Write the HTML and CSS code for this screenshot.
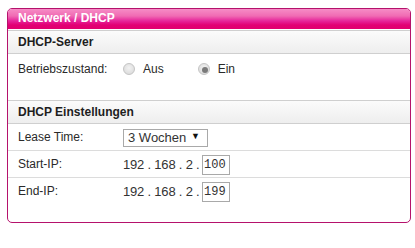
FILE: index.html
```html
<!DOCTYPE html>
<html lang="de">
<head>
  <meta charset="UTF-8">
  <title>Netzwerk / DHCP</title>
  <link rel="stylesheet" href="styles.css">
</head>
<body>
  <div class="panel">
    <div class="panel-title">Netzwerk / DHCP</div>

    <div class="section-head">DHCP-Server</div>
    <div class="row row-first">
      <span class="label">Betriebszustand:</span>
      <div class="radios">
        <label class="radio"><input type="radio" name="state"> Aus</label>
        <label class="radio"><input type="radio" name="state" checked> Ein</label>
      </div>
    </div>

    <div class="section-head">DHCP Einstellungen</div>
    <div class="row line">
      <span class="label">Lease Time:</span>
      <div class="select-wrap">
        <select>
          <option>3 Wochen</option>
        </select>
      </div>
    </div>
    <div class="row line">
      <span class="label">Start-IP:</span>
      <span class="ip">192 . 168 . 2 .</span>
      <input class="octet" type="text" value="100">
    </div>
    <div class="row last">
      <span class="label">End-IP:</span>
      <span class="ip">192 . 168 . 2 .</span>
      <input class="octet" type="text" value="199">
    </div>
  </div>
</body>
</html>
```

FILE: styles.css
```css
body {
  margin: 0;
  padding: 8px 4px 0 7px;
  background: #fff;
  font-family: "Liberation Sans", Arial, sans-serif;
  font-size: 12px;
  color: #222;
}
.panel {
  width: 402px;
  border: 1px solid #b5126c;
  border-radius: 5px;
  overflow: hidden;
  padding-bottom: 18px;
}
.panel-title {
  height: 20px;
  line-height: 19px;
  padding-left: 10px;
  color: #fff;
  font-weight: bold;
  background: linear-gradient(#f68cc6 0%, #f06bb3 35%, #e6239a 60%, #e20074 80%, #e0006f 100%);
  border-bottom: 1px solid #fff;
}
.section-head {
  height: 22px;
  line-height: 22px;
  padding-left: 10px;
  font-weight: bold;
  color: #1e1e1e;
  border-top: 1px solid #cfcfcf;
  border-bottom: 1px solid #cfcfcf;
  background: linear-gradient(#fbfbfb, #eeeeee);
}
.row {
  display: flex;
  align-items: center;
  height: 26px;
  padding-left: 10px;
  color: #2a2a2a;
}
.row-first {
  height: 30px;
  margin-bottom: 16px;
}
.row.line {
  border-bottom: 1px solid #dcdcdc;
}
.label {
  width: 105px;
  flex: none;
}
.radios {
  display: flex;
  gap: 34px;
}
.radio {
  display: flex;
  align-items: center;
  gap: 8px;
}
.radio input {
  appearance: none;
  margin: 0;
  width: 12px;
  height: 12px;
  border-radius: 50%;
  border: 1px solid #c4c4c4;
  background: radial-gradient(circle at 50% 40%, #f2f2f2, #d6d6d6);
  position: relative;
}
.radio input:checked::after {
  content: "";
  position: absolute;
  left: 3px;
  top: 3px;
  width: 6px;
  height: 6px;
  border-radius: 50%;
  background: #7a7a7a;
}
.select-wrap {
  position: relative;
}
.select-wrap::after {
  content: "\25BC";
  position: absolute;
  right: 8px;
  top: 3px;
  font-size: 9px;
  color: #111;
  pointer-events: none;
}
.select-wrap select {
  appearance: none;
  width: 85px;
  height: 18px;
  margin: 1px 0 0;
  padding: 0 0 0 4px;
  border: 1px solid #a9a9a9;
  border-radius: 0;
  background: #fff;
  font-family: inherit;
  font-size: 13px;
  color: #333;
}
.ip {
  font-size: 13px;
  color: #333;
  letter-spacing: -0.2px;
  width: 80px;
}
.octet {
  box-sizing: border-box;
  width: 28px;
  height: 20px;
  margin: 1px 0 0 -1px;
  padding: 0 0 0 1px;
  border: 1px solid #a9a9a9;
  font-family: "Liberation Mono", monospace;
  font-size: 12px;
  color: #333;
}
```
